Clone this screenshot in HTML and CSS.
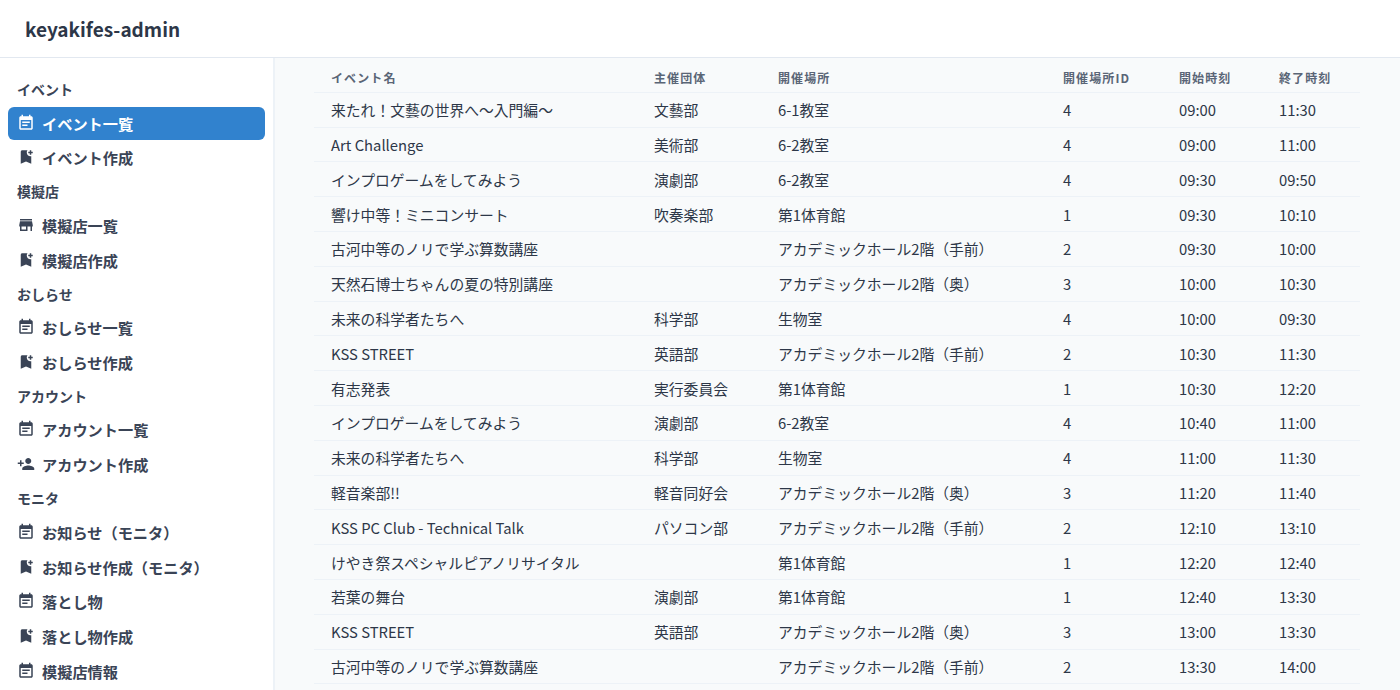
FILE: index.html
```html
<!DOCTYPE html>
<html lang="ja">
<head>
<meta charset="utf-8">
<title>keyakifes-admin</title>
<link rel="stylesheet" href="styles.css">
</head>
<body>
<svg class="sprites" width="0" height="0" aria-hidden="true">
  <symbol id="i-note" viewBox="0 0 24 24"><path d="M17 10H7v2h10v-2zm2-7h-1V1h-2v2H8V1H6v2H5c-1.11 0-1.99.9-1.99 2L3 19c0 1.1.89 2 2 2h14c1.1 0 2-.9 2-2V5c0-1.1-.9-2-2-2zm0 16H5V8h14v11zm-5-5H7v2h7v-2z"/></symbol>
  <symbol id="i-bookmark" viewBox="0 0 24 24"><path d="M21 7h-2v2h-2V7h-2V5h2V3h2v2h2v2zM19 21l-7-3-7 3V5c0-1.1.9-2 2-2h7c-.63.84-1 1.87-1 3 0 2.76 2.24 5 5 5 .34 0 .68-.03 1-.1V21z"/></symbol>
  <symbol id="i-store" viewBox="0 0 24 24"><path d="M20 4H4v2h16V4zm1 10v-2l-1-5H4l-1 5v2h1v6h10v-6h4v6h2v-6h1zm-9 4H6v-4h6v4z"/></symbol>
  <symbol id="i-person" viewBox="0 0 24 24"><path d="M15 12c2.21 0 4-1.79 4-4s-1.79-4-4-4-4 1.79-4 4 1.79 4 4 4zm-9-2V7H4v3H1v2h3v3h2v-3h3v-2H6zm9 4c-2.67 0-8 1.34-8 4v2h16v-2c0-2.66-5.33-4-8-4z"/></symbol>
</svg>
<header class="topbar"><span class="brand">keyakifes-admin</span></header>
<div class="shell">
  <nav class="sidebar">
    <div class="group">イベント</div>
    <a class="item active"><svg class="icon"><use href="#i-note"/></svg>イベント一覧</a>
    <a class="item"><svg class="icon"><use href="#i-bookmark"/></svg>イベント作成</a>
    <div class="group">模擬店</div>
    <a class="item"><svg class="icon"><use href="#i-store"/></svg>模擬店一覧</a>
    <a class="item"><svg class="icon"><use href="#i-bookmark"/></svg>模擬店作成</a>
    <div class="group">おしらせ</div>
    <a class="item"><svg class="icon"><use href="#i-note"/></svg>おしらせ一覧</a>
    <a class="item"><svg class="icon"><use href="#i-bookmark"/></svg>おしらせ作成</a>
    <div class="group">アカウント</div>
    <a class="item"><svg class="icon"><use href="#i-note"/></svg>アカウント一覧</a>
    <a class="item"><svg class="icon"><use href="#i-person"/></svg>アカウント作成</a>
    <div class="group">モニタ</div>
    <a class="item"><svg class="icon"><use href="#i-note"/></svg>お知らせ（モニタ）</a>
    <a class="item"><svg class="icon"><use href="#i-bookmark"/></svg>お知らせ作成（モニタ）</a>
    <a class="item"><svg class="icon"><use href="#i-note"/></svg>落とし物</a>
    <a class="item"><svg class="icon"><use href="#i-bookmark"/></svg>落とし物作成</a>
    <a class="item"><svg class="icon"><use href="#i-note"/></svg>模擬店情報</a>
  </nav>
  <main class="content">
    <table class="events">
      <colgroup>
        <col class="c-name"><col class="c-org"><col class="c-place"><col class="c-id"><col class="c-start"><col class="c-end">
      </colgroup>
      <thead>
        <tr><th>イベント名</th><th>主催団体</th><th>開催場所</th><th>開催場所ID</th><th>開始時刻</th><th>終了時刻</th></tr>
      </thead>
      <tbody>
        <tr><td>来たれ！文藝の世界へ〜入門編〜</td><td>文藝部</td><td>6-1教室</td><td>4</td><td>09:00</td><td>11:30</td></tr>
        <tr><td>Art Challenge</td><td>美術部</td><td>6-2教室</td><td>4</td><td>09:00</td><td>11:00</td></tr>
        <tr><td>インプロゲームをしてみよう</td><td>演劇部</td><td>6-2教室</td><td>4</td><td>09:30</td><td>09:50</td></tr>
        <tr><td>響け中等！ミニコンサート</td><td>吹奏楽部</td><td>第1体育館</td><td>1</td><td>09:30</td><td>10:10</td></tr>
        <tr><td>古河中等のノリで学ぶ算数講座</td><td></td><td>アカデミックホール2階（手前）</td><td>2</td><td>09:30</td><td>10:00</td></tr>
        <tr><td>天然石博士ちゃんの夏の特別講座</td><td></td><td>アカデミックホール2階（奥）</td><td>3</td><td>10:00</td><td>10:30</td></tr>
        <tr><td>未来の科学者たちへ</td><td>科学部</td><td>生物室</td><td>4</td><td>10:00</td><td>09:30</td></tr>
        <tr><td>KSS STREET</td><td>英語部</td><td>アカデミックホール2階（手前）</td><td>2</td><td>10:30</td><td>11:30</td></tr>
        <tr><td>有志発表</td><td>実行委員会</td><td>第1体育館</td><td>1</td><td>10:30</td><td>12:20</td></tr>
        <tr><td>インプロゲームをしてみよう</td><td>演劇部</td><td>6-2教室</td><td>4</td><td>10:40</td><td>11:00</td></tr>
        <tr><td>未来の科学者たちへ</td><td>科学部</td><td>生物室</td><td>4</td><td>11:00</td><td>11:30</td></tr>
        <tr><td>軽音楽部!!</td><td>軽音同好会</td><td>アカデミックホール2階（奥）</td><td>3</td><td>11:20</td><td>11:40</td></tr>
        <tr><td>KSS PC Club - Technical Talk</td><td>パソコン部</td><td>アカデミックホール2階（手前）</td><td>2</td><td>12:10</td><td>13:10</td></tr>
        <tr><td>けやき祭スペシャルピアノリサイタル</td><td></td><td>第1体育館</td><td>1</td><td>12:20</td><td>12:40</td></tr>
        <tr><td>若葉の舞台</td><td>演劇部</td><td>第1体育館</td><td>1</td><td>12:40</td><td>13:30</td></tr>
        <tr><td>KSS STREET</td><td>英語部</td><td>アカデミックホール2階（奥）</td><td>3</td><td>13:00</td><td>13:30</td></tr>
        <tr><td>古河中等のノリで学ぶ算数講座</td><td></td><td>アカデミックホール2階（手前）</td><td>2</td><td>13:30</td><td>14:00</td></tr>
      </tbody>
    </table>
  </main>
</div>
</body>
</html>
```
FILE: styles.css
```css
* { box-sizing: border-box; }
html, body { margin: 0; height: 100%; overflow: hidden; }
body {
  font-family: "Noto Sans CJK JP", "Noto Sans", sans-serif;
  color: #1A202C;
  background: #fff;
  display: flex;
  flex-direction: column;
}
.sprites { position: absolute; }
.topbar {
  flex: none;
  height: 58px;
  border-bottom: 1px solid #E2E8F0;
  padding-left: 25px;
  display: flex;
  align-items: center;
}
.brand { font-size: 19px; font-weight: 600; color: #2D3748; line-height: 24px; }
.shell { flex: 1; display: flex; min-height: 0; }
.sidebar {
  flex: none;
  width: 275px;
  border-right: 2px solid #EDF2F7;
  padding: 21px 8px 0;
  overflow: hidden;
}
.group {
  font-size: 14px;
  font-weight: 600;
  color: #3A4456;
  line-height: 20px;
  padding-left: 9px;
  margin-bottom: 8px;
}
.item {
  display: flex;
  align-items: center;
  height: 33px;
  margin-bottom: 1.9px;
  padding: 0 0 2px 9px;
  border-radius: 6px;
  font-size: 15.2px;
  font-weight: 600;
  color: #3A4456;
}
.item + .group { margin-top: 6.4px; }
.item.active { background: #3182CE; color: #fff; }
.icon { width: 18px; height: 18px; margin-right: 7px; fill: currentColor; flex: none; }
.content {
  flex: 1;
  min-width: 0;
  background: #F8FAFB;
  padding: 0 40px 0 39px;
  overflow: hidden;
}
.events { width: 1046px; border-collapse: collapse; table-layout: fixed; }
.c-name { width: 323px; }
.c-org { width: 124px; }
.c-place { width: 285px; }
.c-id { width: 116px; }
.c-start { width: 100px; }
.c-end { width: 98px; }
.events th, .events td { padding: 0 0 0 17px; text-align: left; border-bottom: 1px solid #EDF2F7; }
.events th {
  height: 34.4px;
  padding-top: 5px;
  font-size: 12px;
  font-weight: 600;
  letter-spacing: 1.1px;
  color: #5A6576;
}
.events td { height: 34.8px; font-size: 14.8px; color: #2D3748; }
```
